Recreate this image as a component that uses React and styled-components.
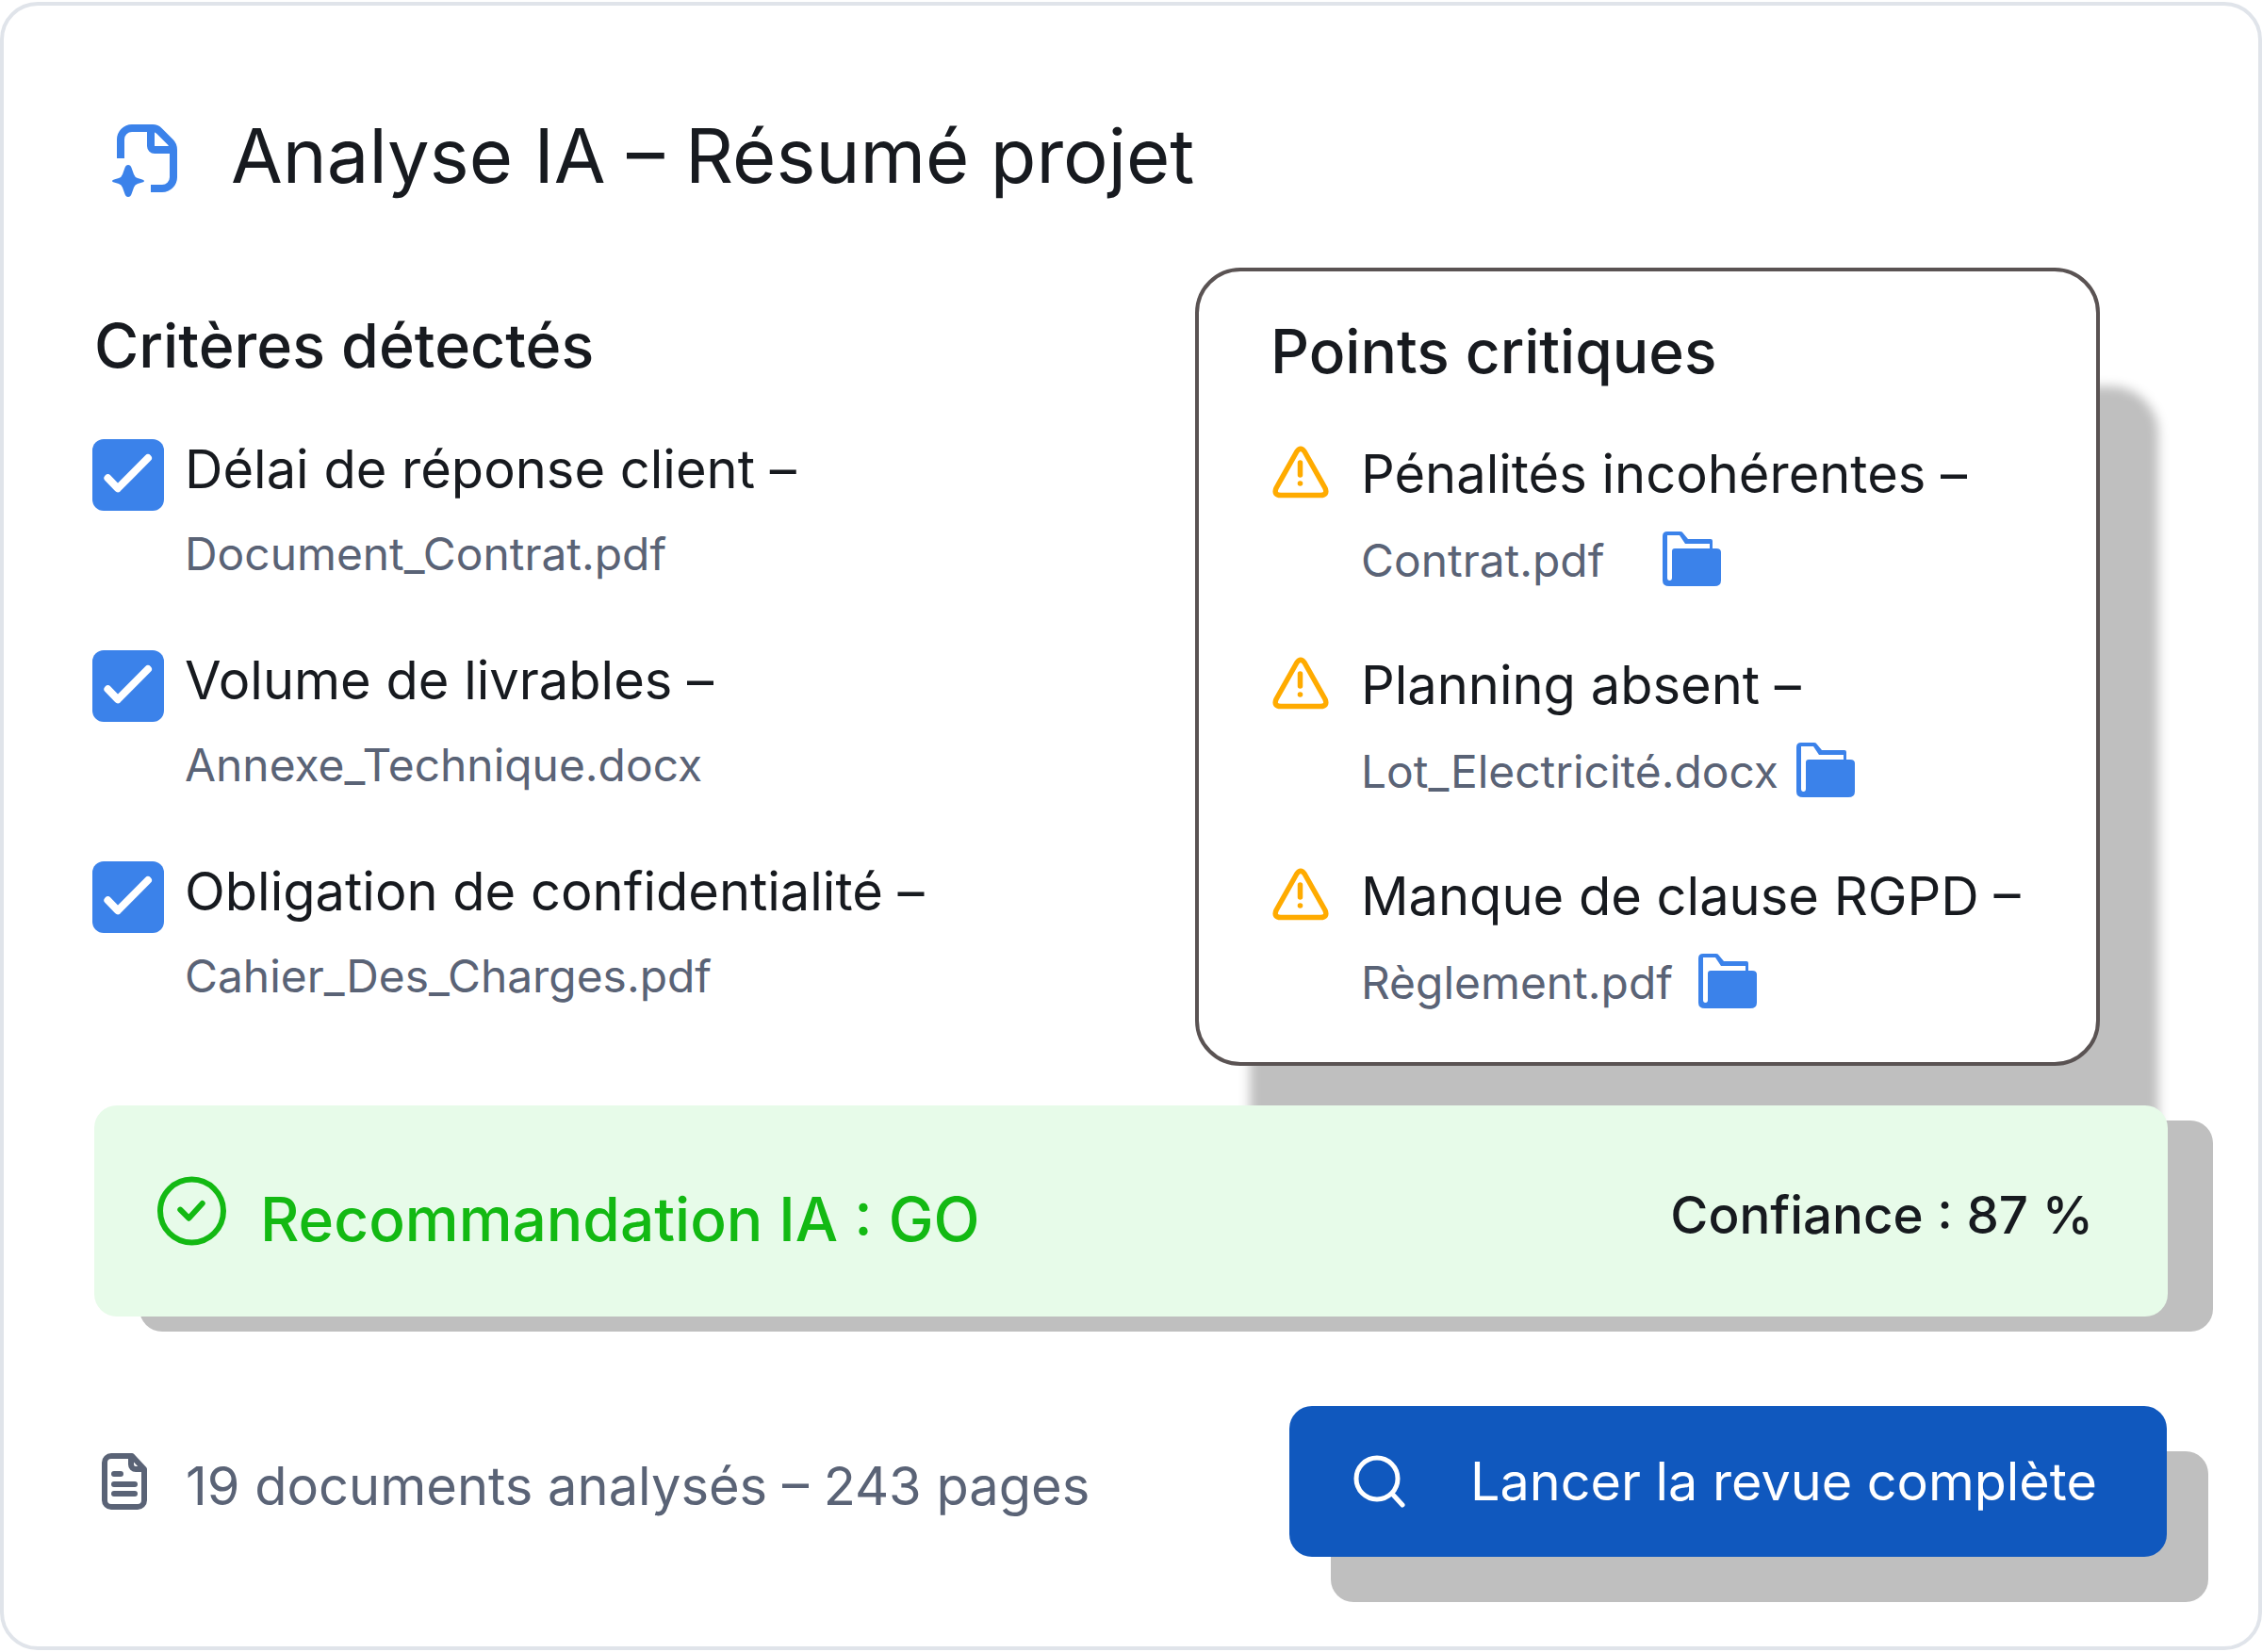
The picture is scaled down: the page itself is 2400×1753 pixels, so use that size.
import React from "react";
import styled, { createGlobalStyle } from "styled-components";

const GlobalStyle = createGlobalStyle`
  html, body {
    margin: 0;
    padding: 0;
    background: #ffffff;
  }
  body {
    font-family: Inter, "Noto Sans", sans-serif;
    color: #171a1f;
  }
`;

const criteria = [
  { label: "Délai de réponse client –", file: "Document_Contrat.pdf" },
  { label: "Volume de livrables –", file: "Annexe_Technique.docx" },
  { label: "Obligation de confidentialité –", file: "Cahier_Des_Charges.pdf" },
];

const issues = [
  { label: "Pénalités incohérentes –", file: "Contrat.pdf", gap: 62 },
  { label: "Planning absent –", file: "Lot_Electricité.docx", gap: 19 },
  { label: "Manque de clause RGPD –", file: "Règlement.pdf", gap: 27 },
];

const SparkFileIcon = () => (
  <svg width="72" height="80" viewBox="0 0 72 80" fill="none">
    <path
      d="M10 38V18a12 12 0 0 1 12-12H44q4 0 7 3L63 21q3 3 3 8V58a12 12 0 0 1-12 12H42"
      stroke="#3b82ea"
      strokeWidth="8"
    />
    <path d="M42 6V25a4 4 0 0 0 4 4H66" stroke="#3b82ea" strokeWidth="8" />
    <path
      d="M18 45Q20.500 45 21.500 48L24 55Q25 58 28 59L33 60.500Q35 61 35 62Q35 63 33 63.500L28 65Q25 66 24 69L21.500 76Q20.500 79 18 79Q15.500 79 14.500 76L12 69Q11 66 8 65L3 63.500Q1 63 1 62Q1 61 3 60.500L8 59Q11 58 12 55L14.500 48Q15.500 45 18 45Z"
      fill="#3b82ea"
    />
  </svg>
);

const CheckIcon = () => (
  <svg width="76" height="76" viewBox="0 0 76 76" fill="none">
    <path
      d="M16.400 41.300L27 52.300L59 20"
      stroke="#ffffff"
      strokeWidth="8"
      strokeLinecap="round"
      strokeLinejoin="round"
    />
  </svg>
);

const WarningIcon = () => (
  <svg width="60" height="56" viewBox="0 0 60 56" fill="none">
    <path
      d="M26 6Q30 0.500 34 6L56 45Q59 52.500 51 52.500H9Q1 52.500 4 45Z"
      stroke="#ffab00"
      strokeWidth="5.500"
      strokeLinejoin="round"
    />
    <path d="M29.500 18V31" stroke="#ffab00" strokeWidth="5.500" strokeLinecap="round" />
    <circle cx="29.500" cy="40" r="2.800" fill="#ffab00" />
  </svg>
);

const FolderIcon = () => (
  <svg width="62" height="58" viewBox="0 0 62 58">
    <path
      fillRule="evenodd"
      fill="#3b82ea"
      d="M5 0H19Q21 0 22 2L27 8H51Q53 8 53 10V18H57Q62 18 62 22V52Q62 58 55 58H7Q0 58 0 52V5Q0 0 5 0ZM5 4H18L24 13H50V18H13Q10 18 10 21V49Q10 52 7.500 52Q5 52 5 49Z"
    />
  </svg>
);

const CircleCheckIcon = () => (
  <svg width="73" height="74" viewBox="0 0 73 74" fill="none">
    <circle cx="36.500" cy="37" r="33.500" stroke="#13b913" strokeWidth="6" />
    <path
      d="M24.300 35.700L33.300 44.700L47.700 29"
      stroke="#13b913"
      strokeWidth="6"
      strokeLinecap="round"
      strokeLinejoin="round"
    />
  </svg>
);

const DocIcon = () => (
  <svg width="48" height="60" viewBox="0 0 48 60" fill="none">
    <path
      d="M10 3H32L45 17V50a7 7 0 0 1-7 7H10a7 7 0 0 1-7-7V10a7 7 0 0 1 7-7Z"
      stroke="#5a6376"
      strokeWidth="6"
      strokeLinejoin="round"
    />
    <path d="M31 3V12a5 5 0 0 0 5 5H45" stroke="#5a6376" strokeWidth="6" />
    <path
      d="M13 22H20M13 33H35M13 43H35"
      stroke="#5a6376"
      strokeWidth="6"
      strokeLinecap="round"
    />
  </svg>
);

const SearchIcon = () => (
  <svg width="56" height="56" viewBox="0 0 56 56" fill="none">
    <circle cx="25" cy="25" r="22" stroke="#ffffff" strokeWidth="5" />
    <path d="M41 41L52 53" stroke="#ffffff" strokeWidth="5" strokeLinecap="round" />
  </svg>
);

export default function App() {
  return (
    <>
      <GlobalStyle />
      <Card>
        <Header>
          <HeaderIcon>
            <SparkFileIcon />
          </HeaderIcon>
          <Title>Analyse IA – Résumé projet</Title>
        </Header>

        <Columns>
          <LeftColumn>
            <LeftTitle>Critères détectés</LeftTitle>
            <List>
              {criteria.map((item) => (
                <Row key={item.label}>
                  <CheckBox>
                    <CheckIcon />
                  </CheckBox>
                  <RowText>
                    <RowLabel>{item.label}</RowLabel>
                    <RowFile>{item.file}</RowFile>
                  </RowText>
                </Row>
              ))}
            </List>
          </LeftColumn>

          <Panel>
            <SectionTitle>Points critiques</SectionTitle>
            <PanelList>
              {issues.map((item) => (
                <PanelRow key={item.label}>
                  <WarningSlot>
                    <WarningIcon />
                  </WarningSlot>
                  <RowText>
                    <RowLabel>{item.label}</RowLabel>
                    <FileLine $gap={item.gap}>
                      <RowFile>{item.file}</RowFile>
                      <FolderIcon />
                    </FileLine>
                  </RowText>
                </PanelRow>
              ))}
            </PanelList>
          </Panel>
        </Columns>

        <Verdict>
          <VerdictLeft>
            <VerdictIcon>
              <CircleCheckIcon />
            </VerdictIcon>
            <VerdictText>Recommandation IA : GO</VerdictText>
          </VerdictLeft>
          <Confidence>Confiance : 87 %</Confidence>
        </Verdict>

        <Footer>
          <Stats>
            <DocIcon />
            <StatsText>19 documents analysés – 243 pages</StatsText>
          </Stats>
          <ReviewButton>
            <SearchIcon />
            <span>Lancer la revue complète</span>
          </ReviewButton>
        </Footer>
      </Card>
    </>
  );
}

const Card = styled.div`
  box-sizing: border-box;
  width: 2400px;
  height: 1749px;
  margin: 2px 0;
  padding: 119px 96px 0 94px;
  border: 4px solid #e0e4ea;
  border-radius: 40px;
  background: #ffffff;
`;

const Header = styled.header`
  display: flex;
  align-items: flex-start;
  gap: 55px;
  height: 80px;
  margin-left: 20px;
`;

const HeaderIcon = styled.div`
  display: flex;
  margin-top: 5px;
`;

const Title = styled.h1`
  margin: 0;
  font-size: 79.500px;
  line-height: 80px;
  font-weight: 400;
  color: #171a1f;
`;

const Columns = styled.div`
  display: grid;
  grid-template-columns: 1170px 960px;
  grid-template-rows: 847px;
  margin-top: 79px;
`;

const LeftColumn = styled.section`
  padding: 43px 0 0 2px;
`;

const SectionTitle = styled.h2`
  margin: 0;
  font-size: 64px;
  line-height: 80px;
  font-weight: 500;
  color: #171a1f;
`;

const LeftTitle = styled(SectionTitle)`
  font-size: 64.500px;
`;

const List = styled.div`
  display: flex;
  flex-direction: column;
  margin: 56px 0 0 -2px;
`;

const Row = styled.div`
  display: flex;
  gap: 22px;
  height: 224px;
`;

const CheckBox = styled.div`
  flex: none;
  width: 76px;
  height: 76px;
  margin-top: 3px;
  border-radius: 12px;
  background: #3b82ea;
`;

const RowText = styled.div`
  display: flex;
  flex-direction: column;
  gap: 20px;
`;

const RowLabel = styled.div`
  font-size: 56px;
  line-height: 70px;
  font-weight: 400;
  color: #171a1f;
  white-space: nowrap;
`;

const RowFile = styled.div`
  font-size: 47.900px;
  line-height: 70px;
  font-weight: 400;
  color: #5a6376;
  white-space: nowrap;
`;

const Panel = styled.section`
  box-sizing: border-box;
  padding: 45px 0 0 76px;
  border: 4px solid #5a5353;
  border-radius: 48px;
  background: #ffffff;
  box-shadow: 60px 128px 12px 2px #bfbfbf;
`;

const PanelList = styled.div`
  display: flex;
  flex-direction: column;
  margin-top: 55px;
`;

const PanelRow = styled.div`
  display: flex;
  gap: 34px;
  height: 224px;
`;

const WarningSlot = styled.div`
  flex: none;
  height: 56px;
  margin: 5px 0 0 2px;
`;

const FileLine = styled.div`
  display: flex;
  align-items: center;
  gap: ${(p) => p.$gap}px;
  margin-top: 2px;

  svg {
    margin-top: -4px;
  }
`;

const Verdict = styled.section`
  position: relative;
  display: flex;
  align-items: center;
  justify-content: space-between;
  box-sizing: border-box;
  height: 224px;
  margin: 42px 0 0 2px;
  padding: 0 79px 0 67px;
  border-radius: 24px;
  background: #e7fbe9;
  box-shadow: 48px 16px 0 #bfbfbf;
`;

const VerdictLeft = styled.div`
  display: flex;
  align-items: center;
  gap: 36px;
`;

const VerdictIcon = styled.div`
  display: flex;
`;

const VerdictText = styled.div`
  margin-top: 17px;
  font-size: 64px;
  line-height: 80px;
  font-weight: 500;
  color: #13b913;
`;

const Confidence = styled.div`
  margin-top: 7px;
  font-size: 54.700px;
  line-height: 70px;
  font-weight: 500;
  color: #171a1f;
`;

const Footer = styled.footer`
  display: flex;
  align-items: center;
  justify-content: space-between;
  margin-top: 95px;
  padding-right: 1px;
`;

const Stats = styled.div`
  display: flex;
  align-items: center;
  gap: 41px;
  margin-left: 10px;
`;

const StatsText = styled.div`
  margin-top: 9px;
  font-size: 56px;
  line-height: 70px;
  color: #5a6376;
`;

const ReviewButton = styled.button`
  display: flex;
  align-items: center;
  gap: 68px;
  box-sizing: border-box;
  width: 931px;
  height: 160px;
  padding: 0 0 0 68px;
  border: none;
  border-radius: 24px;
  background: #1058be;
  box-shadow: 44px 48px 0 #bfbfbf;
  font-family: inherit;
  font-size: 55.700px;
  line-height: 70px;
  font-weight: 400;
  color: #ffffff;
`;
